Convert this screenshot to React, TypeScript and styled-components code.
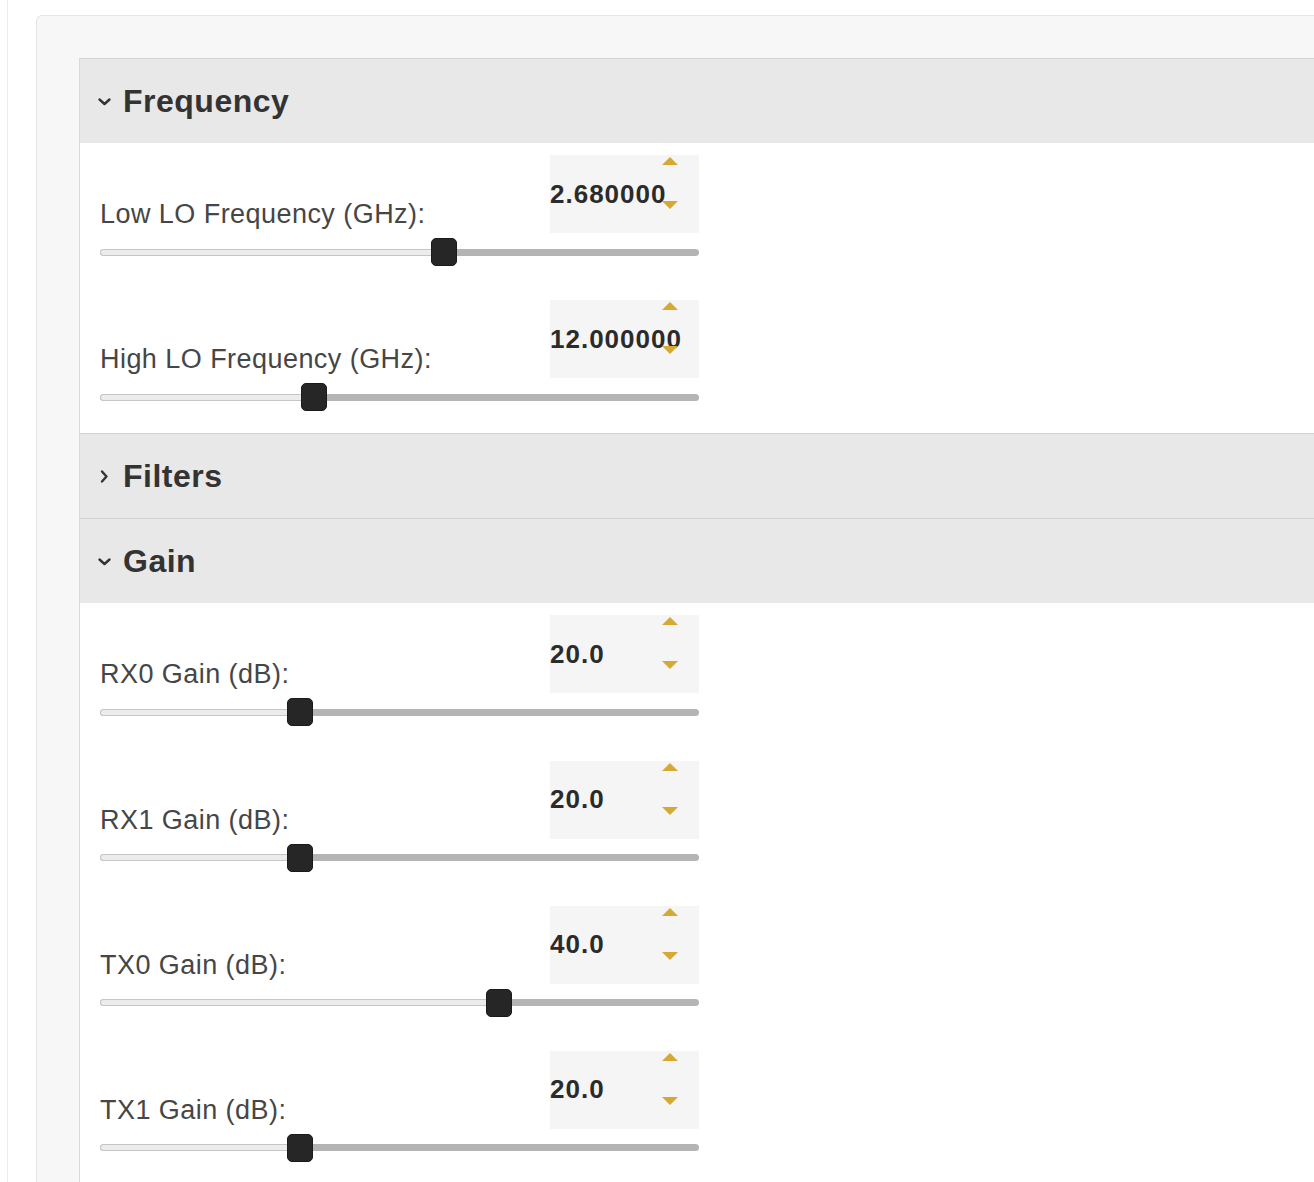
import * as React from 'react';
import styled, {createGlobalStyle} from 'styled-components';

const GlobalStyle = createGlobalStyle`
  html, body {
    margin: 0;
    padding: 0;
    background: #fff;
    height: 1182px;
    overflow: hidden;
  }
  body {
    font-family: "Liberation Sans", Arial, sans-serif;
    color: #444;
  }
`;

const Page = styled.div`
  padding-left: 7px;
`;

const Frame = styled.div`
  border-left: 1px solid #ececec;
  padding: 15px 0 0 28px;
  min-height: 1200px;
`;

const Card = styled.div`
  background: #f7f7f7;
  border: 1px solid #e6e6e6;
  border-right: none;
  border-bottom: none;
  border-radius: 6px 0 0 0;
  padding: 42px 0 0 42px;
  min-height: 1200px;
`;

const Accordion = styled.div`
  background: #fff;
  border-left: 1px solid #d9d9d9;
  min-height: 1200px;
`;

const Header = styled.div`
  display: flex;
  align-items: center;
  gap: 11px;
  height: 84px;
  padding-left: 17px;
  background: #e8e8e8;
  border-top: 1px solid #d2d2d2;
  font-size: 32px;
  font-weight: bold;
  letter-spacing: 0.5px;
  color: #333;
`;

const Chevron = styled.svg`
  width: 15px;
  height: 15px;
  flex: none;
`;

const Body = styled.div`
  padding-left: 20px;
`;

const Row = styled.div`
  width: 599px;
  padding: 12px 0 17.2px;
`;

const TopLine = styled.div`
  display: flex;
  justify-content: space-between;
  align-items: flex-end;
`;

const Label = styled.span`
  font-size: 27px;
  line-height: 30px;
  letter-spacing: 0.45px;
  margin-bottom: 4px;
  color: #464646;
`;

const NumberBox = styled.div`
  position: relative;
  width: 149px;
  height: 78px;
  background: #f5f5f5;
  display: flex;
  align-items: center;
  font-size: 26px;
  font-weight: bold;
  letter-spacing: 1px;
  color: #2b2b2b;
`;

const Arrow = styled.svg<{$down?: boolean}>`
  position: absolute;
  left: 111px;
  top: ${p => (p.$down ? '45px' : '1px')};
  width: 18px;
  height: 10px;
`;

const SliderWrap = styled.div`
  position: relative;
  height: 38px;
  display: flex;
  align-items: center;
`;

const Track = styled.div`
  position: relative;
  width: 100%;
  height: 7px;
  border-radius: 4px;
  background: #b4b4b4;
  overflow: hidden;
`;

const Filled = styled.div`
  position: absolute;
  left: 0;
  top: 0;
  bottom: 0;
  box-sizing: border-box;
  border: 1px solid #c6c6c6;
  border-radius: 4px 0 0 4px;
  background: #ececec;
`;

const Thumb = styled.div`
  position: absolute;
  top: 5px;
  width: 26px;
  height: 28px;
  margin-left: -13px;
  box-sizing: border-box;
  border-radius: 5px;
  background: #262626;
  border: 1px solid #1a1a1a;
`;

interface Param {
  label: string;
  value: number;
  digits: number;
  min: number;
  max: number;
}

const frequency: Param[] = [
  {label: 'Low LO Frequency (GHz):', value: 2.68, digits: 6, min: 0.5, max: 4.3},
  {label: 'High LO Frequency (GHz):', value: 12, digits: 6, min: 6, max: 22.8},
];

const gain: Param[] = [
  {label: 'RX0 Gain (dB):', value: 20, digits: 1, min: 0, max: 60},
  {label: 'RX1 Gain (dB):', value: 20, digits: 1, min: 0, max: 60},
  {label: 'TX0 Gain (dB):', value: 40, digits: 1, min: 0, max: 60},
  {label: 'TX1 Gain (dB):', value: 20, digits: 1, min: 0, max: 60},
];

const ChevronDown = () => (
  <Chevron viewBox="0 0 15 15">
    <path d="M2.5 5.5 L7.5 10 L12.5 5.5" fill="none" stroke="#333" strokeWidth="2.4" strokeLinecap="round" strokeLinejoin="round"/>
  </Chevron>
);

const ChevronRight = () => (
  <Chevron viewBox="0 0 15 15">
    <path d="M5 2.5 L9.5 7.5 L5 12.5" fill="none" stroke="#333" strokeWidth="2.4" strokeLinecap="round" strokeLinejoin="round"/>
  </Chevron>
);

const Spinner = () => (
  <>
    <Arrow viewBox="0 0 18 10">
      <path d="M9 1 L17 9 L1 9 Z" fill="#d6a834"/>
    </Arrow>
    <Arrow $down viewBox="0 0 18 10">
      <path d="M1 1 L17 1 L9 9 Z" fill="#d6a834"/>
    </Arrow>
  </>
);

const ParamRow = ({p}: {p: Param}) => {
  const pct = ((p.value - p.min) / (p.max - p.min)) * 100;
  return (
    <Row>
      <TopLine>
        <Label>{p.label}</Label>
        <NumberBox>
          {p.value.toFixed(p.digits)}
          <Spinner/>
        </NumberBox>
      </TopLine>
      <SliderWrap>
        <Track>
          <Filled style={{width: pct + '%'}}/>
        </Track>
        <Thumb style={{left: pct + '%'}}/>
      </SliderWrap>
    </Row>
  );
};

export default function App() {
  return (
    <>
      <GlobalStyle/>
      <Page>
        <Frame>
          <Card>
            <Accordion>
              <Header><ChevronDown/>Frequency</Header>
              <Body>
                {frequency.map(p => <ParamRow key={p.label} p={p}/>)}
              </Body>
              <Header><ChevronRight/>Filters</Header>
              <Header><ChevronDown/>Gain</Header>
              <Body>
                {gain.map(p => <ParamRow key={p.label} p={p}/>)}
              </Body>
            </Accordion>
          </Card>
        </Frame>
      </Page>
    </>
  );
}
